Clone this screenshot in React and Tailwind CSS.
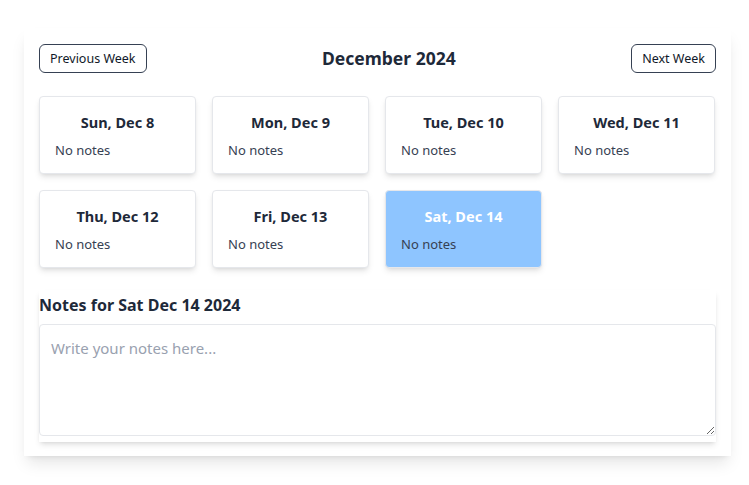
import { useState } from 'react';

const days = [
  { label: 'Sun, Dec 8' },
  { label: 'Mon, Dec 9' },
  { label: 'Tue, Dec 10' },
  { label: 'Wed, Dec 11' },
  { label: 'Thu, Dec 12' },
  { label: 'Fri, Dec 13' },
  { label: 'Sat, Dec 14' },
];

function DayCard({ day, selected, onClick }) {
  return (
    <div
      onClick={onClick}
      className={`h-[78px] rounded border border-gray-200 shadow-md px-[15px] pt-[14px] cursor-pointer ${selected ? 'bg-blue-300' : 'bg-white'}`}
    >
      <div className={`text-center text-[14.5px] font-bold leading-[22px] ${selected ? 'text-white' : 'text-gray-800'}`}>{day.label}</div>
      <div className="mt-[8px] text-[13px] leading-[18px] text-gray-700">No notes</div>
    </div>
  );
}

export default function App() {
  const [selected, setSelected] = useState(6);
  const [notes, setNotes] = useState('');

  return (
    <div className="min-h-screen bg-white pt-[28px] font-['Noto_Sans','Open_Sans',sans-serif]">
      <div className="ml-[24px] w-[707px] bg-white shadow-lg px-[15px] pt-[16px] pb-[14px]">
        <div className="flex items-center justify-between w-[677px]">
          <button className="h-[29px] px-[10px] pt-[1px] rounded-md border border-gray-700 text-[12.5px] text-gray-900">Previous Week</button>
          <h2 className="text-[17.5px] font-bold text-gray-800">December 2024</h2>
          <button className="h-[29px] px-[10px] pt-[1px] rounded-md border border-gray-700 text-[12.5px] text-gray-900">Next Week</button>
        </div>
        <div className="mt-[23px] grid grid-cols-4 gap-4 w-[676px]">
          {days.map((d, i) => (
            <DayCard key={d.label} day={d} selected={i === selected} onClick={() => setSelected(i)} />
          ))}
        </div>
        <div className="mt-[22px] w-[677px] bg-white shadow-md">
          <h3 className="text-[16px] font-bold text-gray-800 leading-[30px]">Notes for Sat Dec 14 2024</h3>
          <textarea
            value={notes}
            onChange={(e) => setNotes(e.target.value)}
            placeholder="Write your notes here..."
            className="mt-[4px] block w-full h-[112px] rounded-sm border border-gray-200 px-[11px] py-[12px] text-[15px] text-gray-800 placeholder:text-gray-400"
          />
          <div className="h-[6px]" />
        </div>
      </div>
    </div>
  );
}
